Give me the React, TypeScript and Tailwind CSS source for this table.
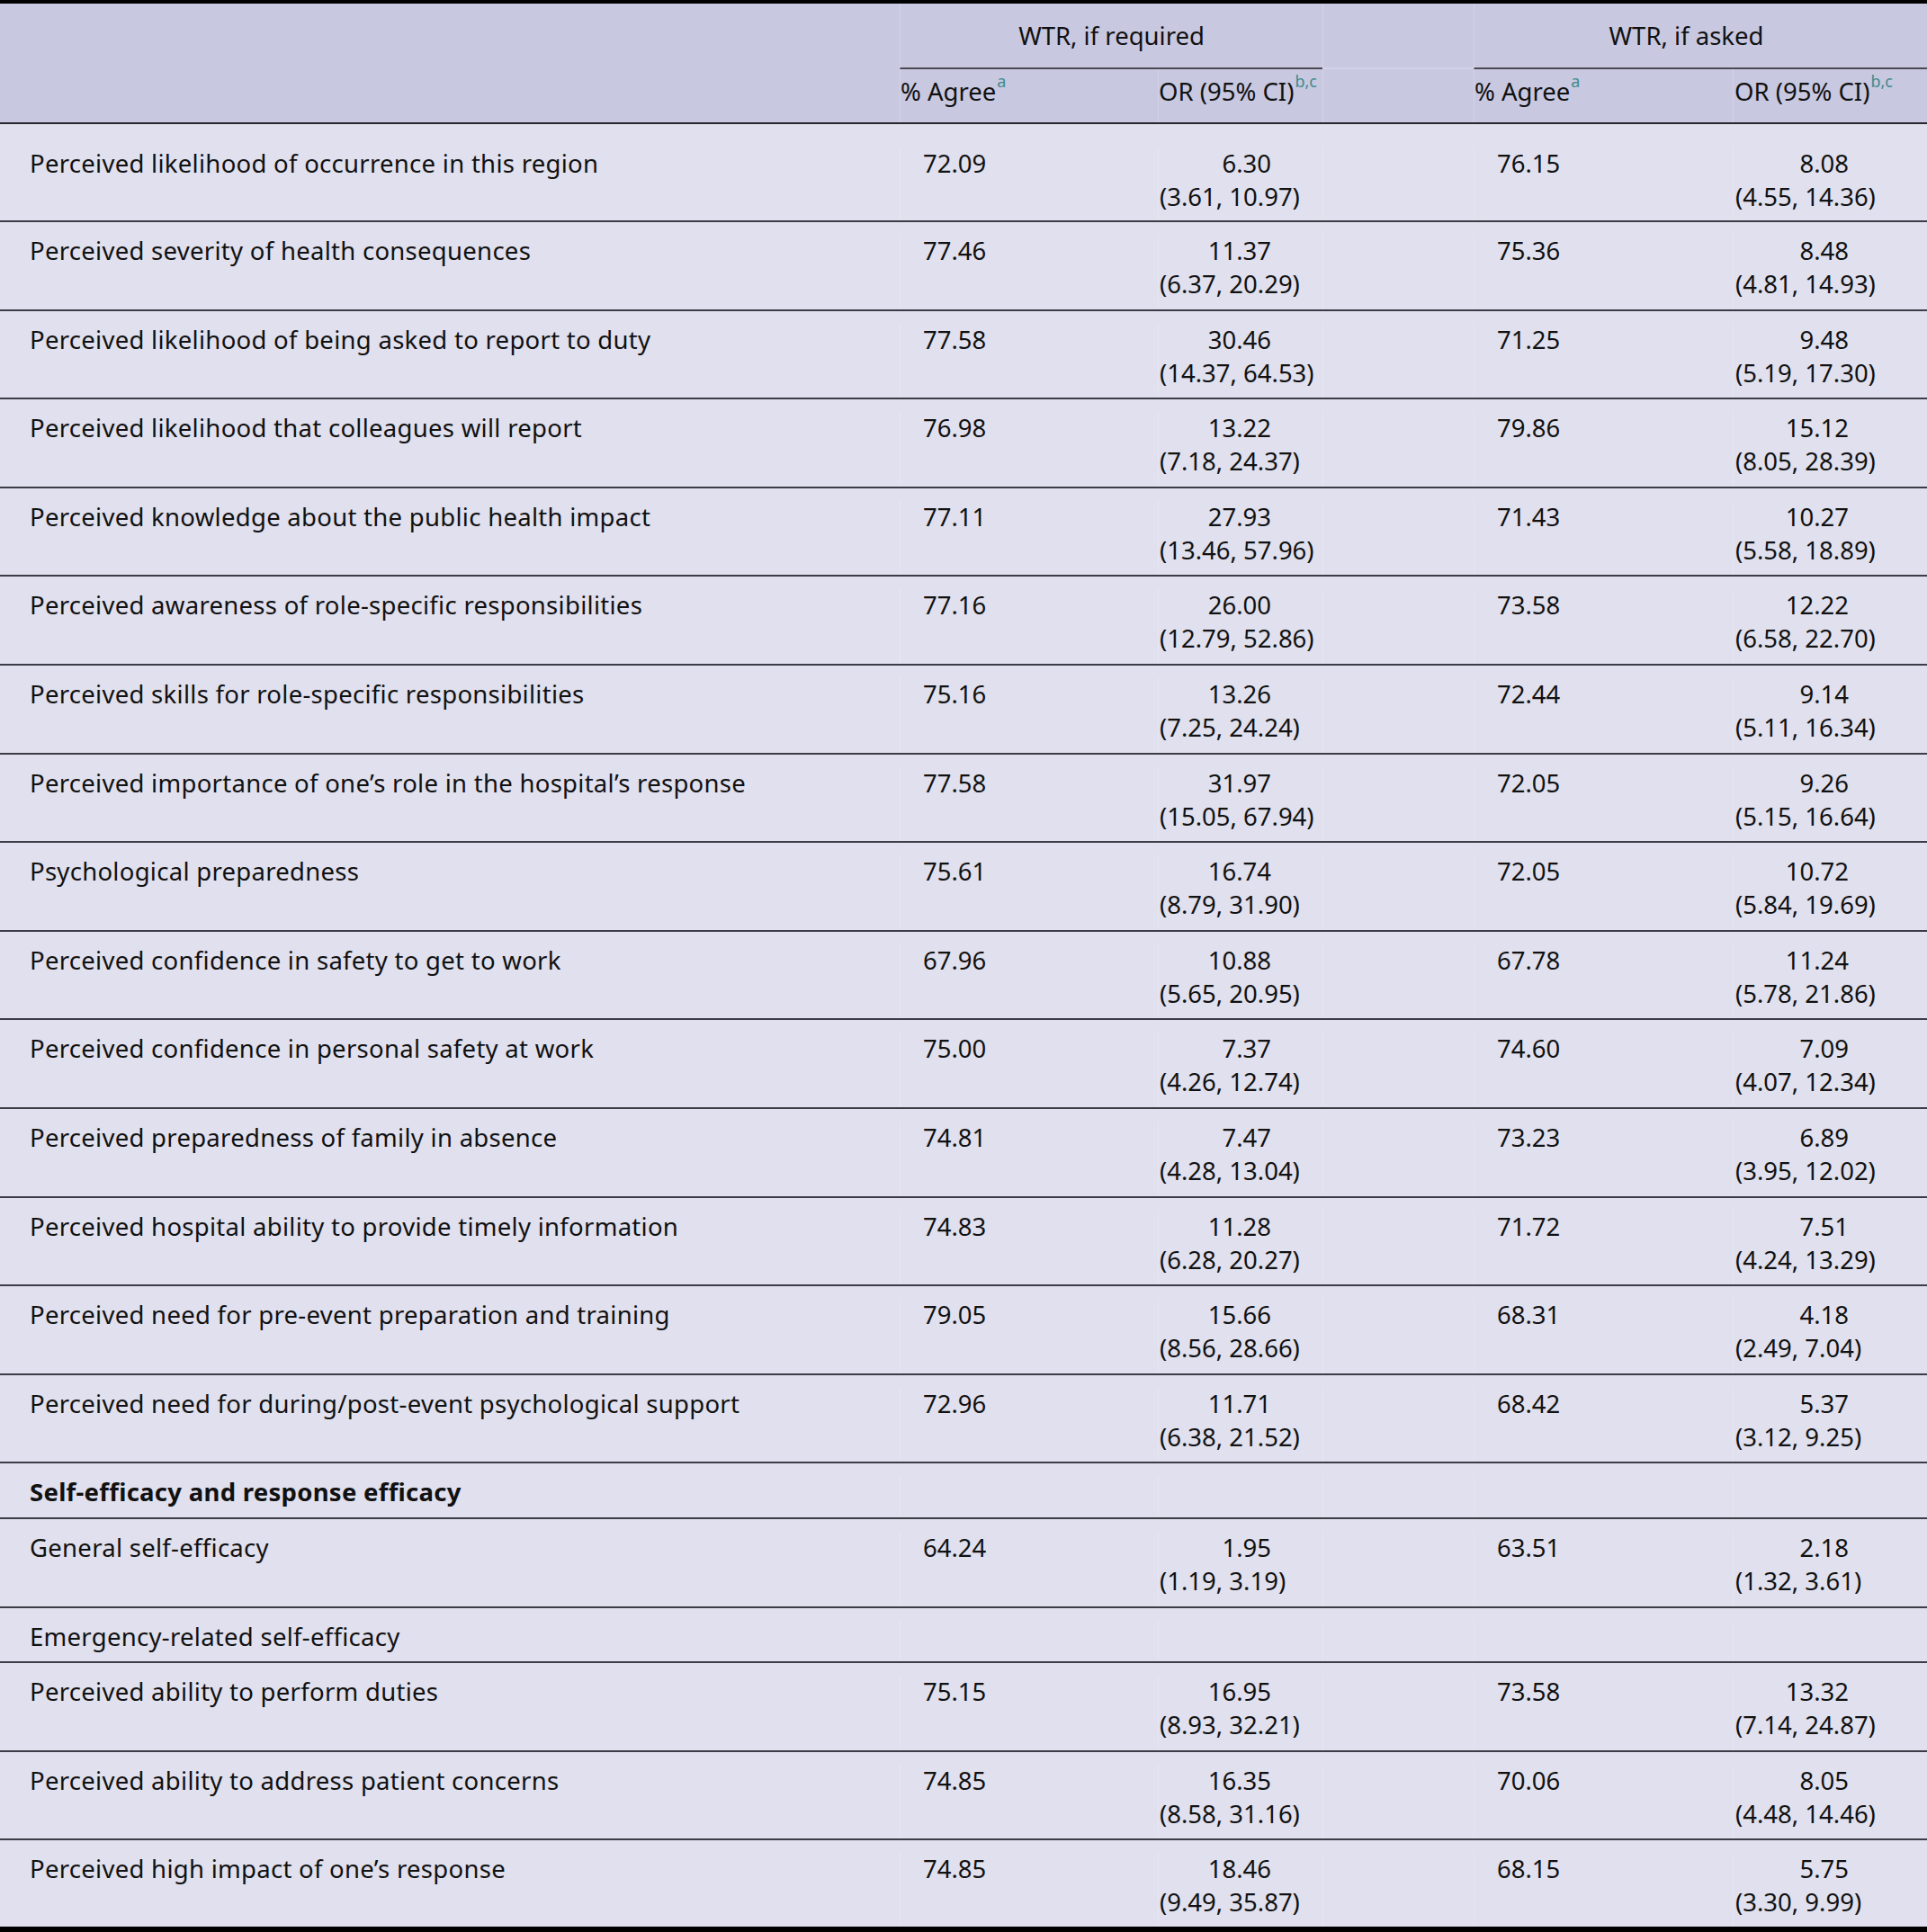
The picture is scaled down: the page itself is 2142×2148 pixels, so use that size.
import React from "react";

type R = {
  label: string;
  a1: string;
  or1: string;
  ci1: string;
  a2: string;
  or2: string;
  ci2: string;
};

const rowsA: R[] = [
  { label: "Perceived likelihood of occurrence in this region", a1: "72.09", or1: "6.30", ci1: "(3.61, 10.97)", a2: "76.15", or2: "8.08", ci2: "(4.55, 14.36)" },
  { label: "Perceived severity of health consequences", a1: "77.46", or1: "11.37", ci1: "(6.37, 20.29)", a2: "75.36", or2: "8.48", ci2: "(4.81, 14.93)" },
  { label: "Perceived likelihood of being asked to report to duty", a1: "77.58", or1: "30.46", ci1: "(14.37, 64.53)", a2: "71.25", or2: "9.48", ci2: "(5.19, 17.30)" },
  { label: "Perceived likelihood that colleagues will report", a1: "76.98", or1: "13.22", ci1: "(7.18, 24.37)", a2: "79.86", or2: "15.12", ci2: "(8.05, 28.39)" },
  { label: "Perceived knowledge about the public health impact", a1: "77.11", or1: "27.93", ci1: "(13.46, 57.96)", a2: "71.43", or2: "10.27", ci2: "(5.58, 18.89)" },
  { label: "Perceived awareness of role-specific responsibilities", a1: "77.16", or1: "26.00", ci1: "(12.79, 52.86)", a2: "73.58", or2: "12.22", ci2: "(6.58, 22.70)" },
  { label: "Perceived skills for role-specific responsibilities", a1: "75.16", or1: "13.26", ci1: "(7.25, 24.24)", a2: "72.44", or2: "9.14", ci2: "(5.11, 16.34)" },
  { label: "Perceived importance of one\u2019s role in the hospital\u2019s response", a1: "77.58", or1: "31.97", ci1: "(15.05, 67.94)", a2: "72.05", or2: "9.26", ci2: "(5.15, 16.64)" },
  { label: "Psychological preparedness", a1: "75.61", or1: "16.74", ci1: "(8.79, 31.90)", a2: "72.05", or2: "10.72", ci2: "(5.84, 19.69)" },
  { label: "Perceived confidence in safety to get to work", a1: "67.96", or1: "10.88", ci1: "(5.65, 20.95)", a2: "67.78", or2: "11.24", ci2: "(5.78, 21.86)" },
  { label: "Perceived confidence in personal safety at work", a1: "75.00", or1: "7.37", ci1: "(4.26, 12.74)", a2: "74.60", or2: "7.09", ci2: "(4.07, 12.34)" },
  { label: "Perceived preparedness of family in absence", a1: "74.81", or1: "7.47", ci1: "(4.28, 13.04)", a2: "73.23", or2: "6.89", ci2: "(3.95, 12.02)" },
  { label: "Perceived hospital ability to provide timely information", a1: "74.83", or1: "11.28", ci1: "(6.28, 20.27)", a2: "71.72", or2: "7.51", ci2: "(4.24, 13.29)" },
  { label: "Perceived need for pre-event preparation and training", a1: "79.05", or1: "15.66", ci1: "(8.56, 28.66)", a2: "68.31", or2: "4.18", ci2: "(2.49, 7.04)" },
  { label: "Perceived need for during/post-event psychological support", a1: "72.96", or1: "11.71", ci1: "(6.38, 21.52)", a2: "68.42", or2: "5.37", ci2: "(3.12, 9.25)" },
];

const general: R = { label: "General self-efficacy", a1: "64.24", or1: "1.95", ci1: "(1.19, 3.19)", a2: "63.51", or2: "2.18", ci2: "(1.32, 3.61)" };

const rowsB: R[] = [
  { label: "Perceived ability to perform duties", a1: "75.15", or1: "16.95", ci1: "(8.93, 32.21)", a2: "73.58", or2: "13.32", ci2: "(7.14, 24.87)" },
  { label: "Perceived ability to address patient concerns", a1: "74.85", or1: "16.35", ci1: "(8.58, 31.16)", a2: "70.06", or2: "8.05", ci2: "(4.48, 14.46)" },
  { label: "Perceived high impact of one\u2019s response", a1: "74.85", or1: "18.46", ci1: "(9.49, 35.87)", a2: "68.15", or2: "5.75", ci2: "(3.30, 9.99)" },
];

const GRID = "grid grid-cols-[1000px_287px_183px_168px_288px_216px]";

function Sup({ children }: { children: React.ReactNode }) {
  return <sup className="-top-[15px] ml-[1px] text-[18px] text-[#3f8b8b]">{children}</sup>;
}

function BodyCell({ children, className = "" }: { children?: React.ReactNode; className?: string }) {
  return <div className={"border-l border-[#e7e7f2] " + className}>{children}</div>;
}

function DataRow({ r, variant }: { r: R; variant: "first" | "normal" | "last" }) {
  const h =
    variant === "first"
      ? "h-[109px] pt-[25px] border-b-2 border-[#3c3c46]"
      : variant === "last"
      ? "h-[101.6px] pt-[13px] border-b-[6px] border-black"
      : "h-[98.6px] pt-[13px] border-b-2 border-[#3c3c46]";
  return (
    <div className={GRID + " bg-[#e0e0ee] " + h}>
      <div className="pl-[33px] tracking-[0.28px]">{r.label}</div>
      <BodyCell className="pl-[25px]">{r.a1}</BodyCell>
      <BodyCell className="pl-[1px]">
        <div className="w-[124px] text-right">{r.or1}</div>
        <div>{r.ci1}</div>
      </BodyCell>
      <BodyCell />
      <BodyCell className="pl-[25px]">{r.a2}</BodyCell>
      <BodyCell className="pl-[2px]">
        <div className="w-[126px] text-right">{r.or2}</div>
        <div>{r.ci2}</div>
      </BodyCell>
    </div>
  );
}

function LabelRow({ label, bold }: { label: string; bold?: boolean }) {
  return (
    <div className={GRID + " h-[61.6px] bg-[#e0e0ee] pt-[13px] border-b-2 border-[#3c3c46]"}>
      <div className={"pl-[33px] tracking-[0.28px] " + (bold ? "font-bold" : "")}>{label}</div>
      <BodyCell />
      <BodyCell />
      <BodyCell />
      <BodyCell />
      <BodyCell />
    </div>
  );
}

export default function App() {
  return (
    <div className="w-[2142px] bg-white font-['Noto_Sans',sans-serif] text-[27.5px] leading-[37px] text-[#111]">
      <div className="border-t-4 border-b-2 border-black border-b-[#26262e] bg-[#c8c8e1]">
        <div className={GRID + " h-[73px]"}>
          <div />
          <div className="col-span-2 border-b-2 border-l border-[#d2d2e8] border-b-[#4a4a52] pt-[17px] text-center">
            WTR, if required
          </div>
          <div className="border-l border-b-2 border-[#d2d2e8]" />
          <div className="col-span-2 border-b-2 border-l border-[#d2d2e8] border-b-[#4a4a52] pr-[32px] pt-[17px] text-center">
            WTR, if asked
          </div>
        </div>
        <div className={GRID + " h-[59px]"}>
          <div />
          <div className="border-l border-[#d2d2e8] pt-[6px]">
            % Agree<Sup>a</Sup>
          </div>
          <div className="border-l border-[#d2d2e8] pt-[6px]">
            OR (95% CI)<Sup>b,c</Sup>
          </div>
          <div className="border-l border-[#d2d2e8]" />
          <div className="border-l border-[#d2d2e8] pt-[6px]">
            % Agree<Sup>a</Sup>
          </div>
          <div className="border-l border-[#d2d2e8] pt-[6px] pl-[1px]">
            OR (95% CI)<Sup>b,c</Sup>
          </div>
        </div>
      </div>
      {rowsA.map((r, i) => (
        <DataRow key={r.label} r={r} variant={i === 0 ? "first" : "normal"} />
      ))}
      <LabelRow label="Self-efficacy and response efficacy" bold />
      <DataRow r={general} variant="normal" />
      <LabelRow label="Emergency-related self-efficacy" />
      {rowsB.map((r, i) => (
        <DataRow key={r.label} r={r} variant={i === rowsB.length - 1 ? "last" : "normal"} />
      ))}
    </div>
  );
}
